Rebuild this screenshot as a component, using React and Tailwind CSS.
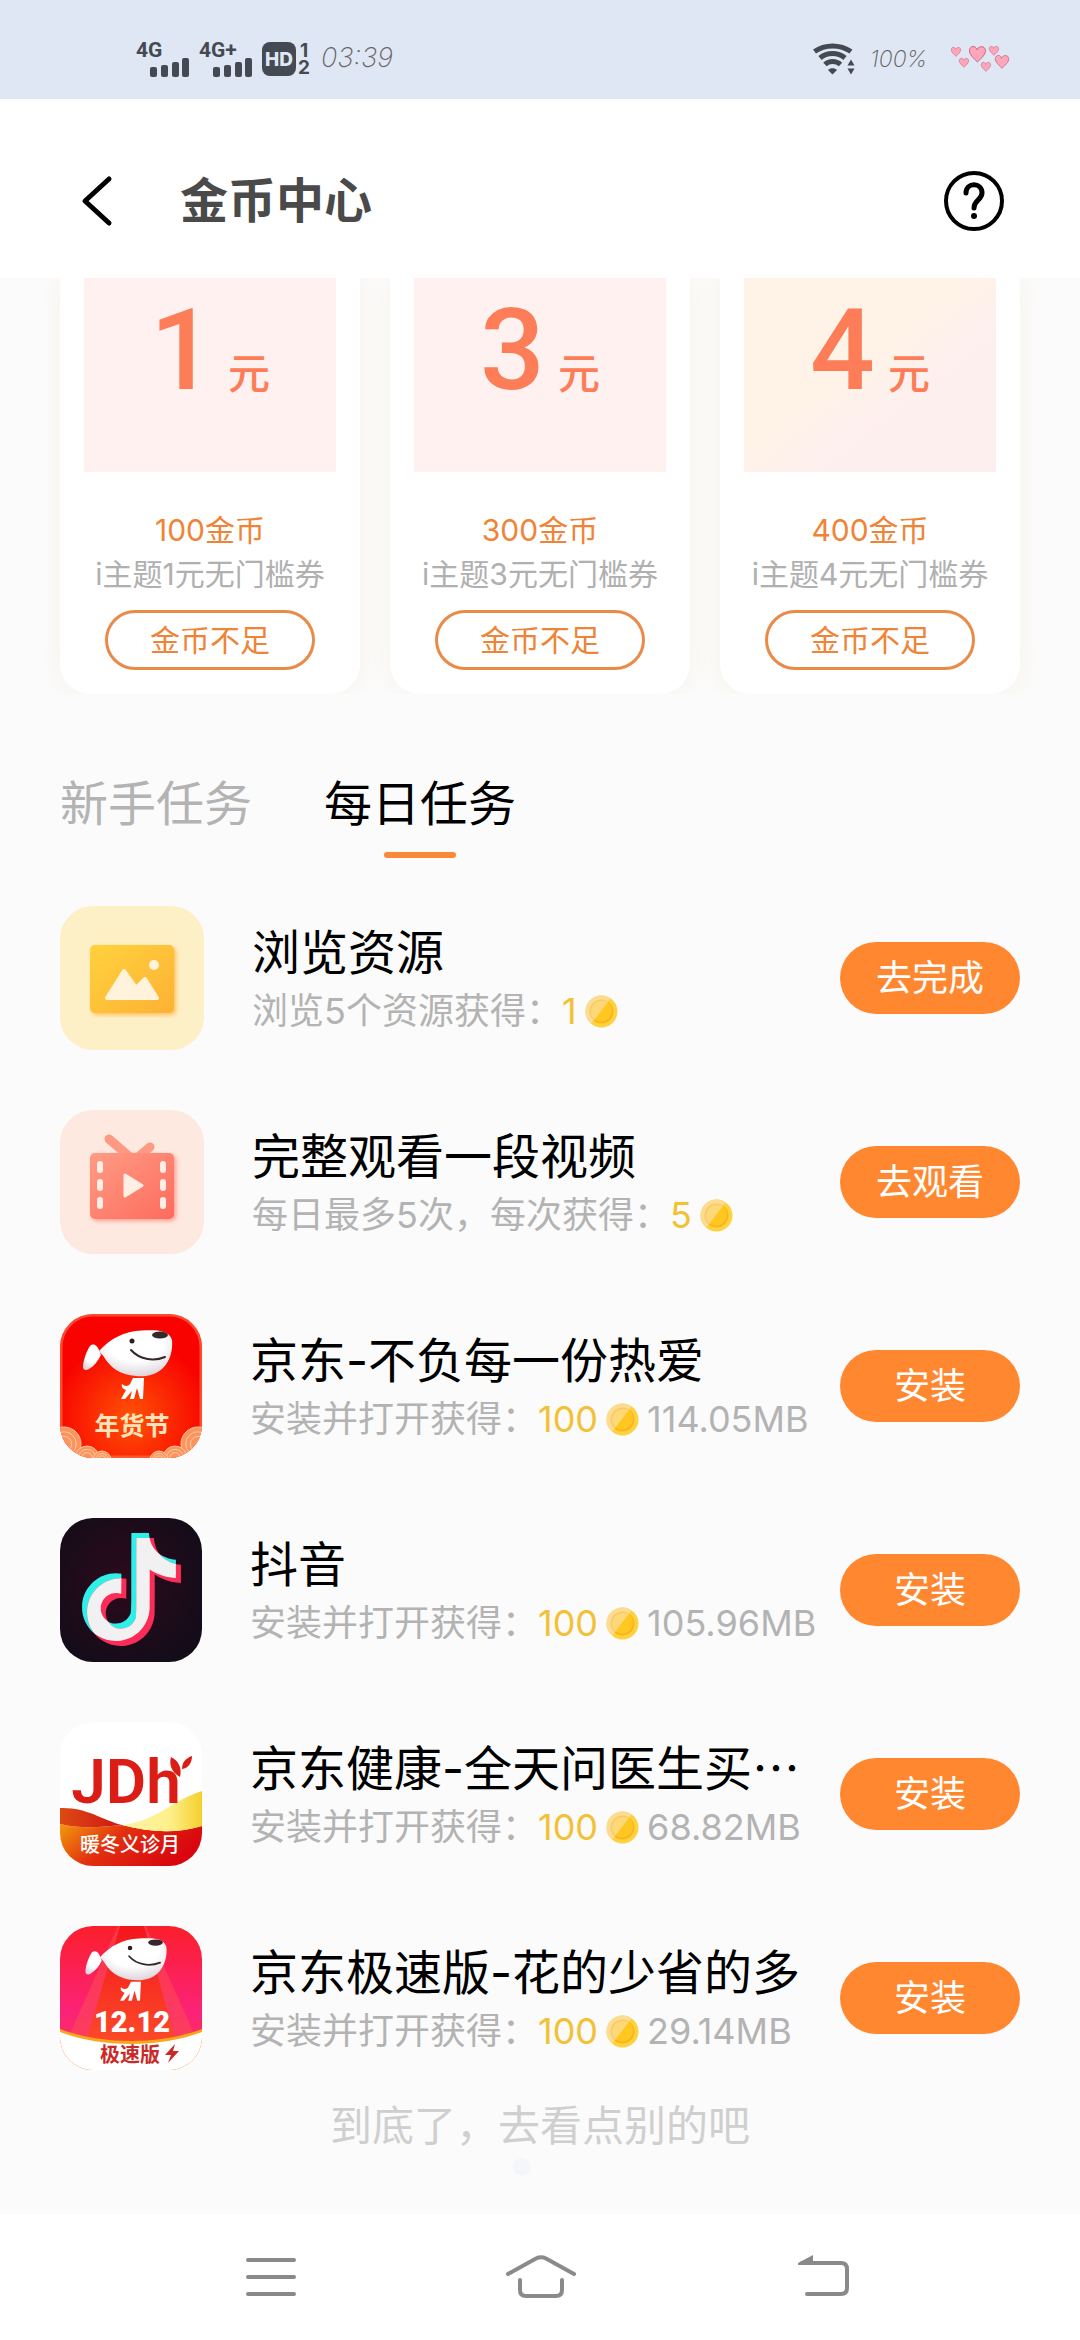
import React, { useId, useState } from "react";

const NOTE_PATH =
  "M12.525.02c1.31-.02 2.61-.01 3.91-.02.08 1.53.63 3.09 1.75 4.17 1.12 1.11 2.7 1.62 4.24 1.79v4.03c-1.44-.05-2.89-.35-4.2-.97-.57-.26-1.1-.59-1.62-.93-.01 2.92.01 5.84-.02 8.75-.08 1.4-.54 2.79-1.35 3.94-1.31 1.92-3.58 3.17-5.91 3.21-1.43.08-2.86-.31-4.08-1.03-2.02-1.19-3.44-3.37-3.65-5.71-.02-.5-.03-1-.01-1.49.18-1.9 1.12-3.72 2.58-4.96 1.66-1.44 3.98-2.13 6.15-1.72.02 1.48-.04 2.96-.04 4.44-.99-.32-2.15-.23-3.02.37-.63.41-1.11 1.04-1.36 1.75-.21.51-.15 1.07-.14 1.61.24 1.64 1.82 3.02 3.5 2.87 1.12-.01 2.19-.66 2.77-1.61.19-.33.4-.67.41-1.06.1-1.79.06-3.57.07-5.36.01-4.03-.01-8.05.02-12.07z";

const SignalBars = () => (
  <svg width="40" height="19" viewBox="0 0 40 19" fill="#454a52">
    <rect x="0" y="9" width="7" height="10" rx="2" />
    <rect x="11" y="7" width="7" height="12" rx="2" />
    <rect x="22" y="4" width="7" height="15" rx="2" />
    <rect x="32" y="0" width="7" height="19" rx="2" />
  </svg>
);

const Signal = ({ label }) => (
  <div className="flex w-[54px] flex-col">
    <span className="font-[Roboto,sans-serif] text-[21px] leading-[16px] font-bold">{label}</span>
    <div className="pl-[14px]">
      <SignalBars />
    </div>
  </div>
);

const WifiIcon = () => (
  <svg width="42" height="32" viewBox="0 0 42 32">
    <g fill="none" stroke="#454a52" strokeWidth="5">
      <path d="M1.500 8.500C12 1 27 1 38 8.500" />
      <path d="M7 15c7-6 18-6 25 0" />
      <path d="M12 21.500c4-4 11-4 15.500 0" />
    </g>
    <path d="M15 27c2-2.500 7-2.500 9 0l-4.500 4.500z" fill="#454a52" />
    <path d="M34.500 22.500l3.500-6 3.500 6zM34.500 25.500l3.500 6 3.500-6z" fill="#454a52" />
  </svg>
);

const Heart = ({ x, y, s }) => (
  <path
    transform={`translate(${x} ${y}) scale(${s})`}
    d="M9 17C5 13 0 9 .5 4.500 1-.5 7-1 8.500 4 10.500-.5 17-.5 17.500 4.500 18 9 13 13 9 17z"
    fill="#ffa6bb"
    stroke="#c2607c"
    strokeWidth="1"
  />
);

const HeartsIcon = () => (
  <svg width="61" height="28" viewBox="0 0 61 28">
    <Heart x={1} y={2} s={0.55} />
    <Heart x={9} y={13} s={0.55} />
    <Heart x={19} y={1} s={0.94} />
    <Heart x={39} y={1} s={0.55} />
    <Heart x={31} y={17} s={0.55} />
    <Heart x={45} y={10} s={0.78} />
  </svg>
);

const StatusBar = () => (
  <div className="flex h-[99px] items-start justify-between bg-[#dee7f3] pt-[42px] pr-[69px] pl-[136px] text-[#454a52]">
    <div className="flex items-start">
      <Signal label="4G" />
      <div className="pl-[9px]">
        <Signal label="4G+" />
      </div>
      <div className="ml-[9px] flex h-[34px] w-[34px] items-center justify-center rounded-lg bg-[#454a52] text-[19px] leading-none font-extrabold text-[#dee7f3]">
        HD
      </div>
      <div className="ml-[2px] flex flex-col text-[19px] leading-[17px] font-bold">
        <span className="pl-[2px]">1</span>
        <span>2</span>
      </div>
      <span className="ml-[11px] text-[27px] leading-[32px] font-extralight text-[#6a6464] italic">
        03:39
      </span>
    </div>
    <div className="flex items-center">
      <WifiIcon />
      <span className="ml-[15px] w-[70px] text-[23px] leading-[34px] font-extralight text-[#5d5a58] italic">
        100%
      </span>
      <div className="pl-[10px]">
        <HeartsIcon />
      </div>
    </div>
  </div>
);

const Header = () => (
  <header className="flex h-[179px] items-center bg-white pt-6 pr-[76px] pl-[80px]">
    <button aria-label="返回">
      <svg width="34" height="52" viewBox="0 0 34 52">
        <path
          d="M29 4L5 26l24 22"
          fill="none"
          stroke="#000"
          strokeWidth="5"
          strokeLinecap="round"
          strokeLinejoin="round"
        />
      </svg>
    </button>
    <h1 className="flex-1 pl-[66px] text-[48px] leading-[60px] font-bold text-[#4a4a4a]">
      金币中心
    </h1>
    <button aria-label="帮助">
      <svg width="60" height="60" viewBox="0 0 60 60" fill="none" stroke="#000">
        <circle cx="30" cy="30" r="28" strokeWidth="4" />
        <path
          d="M22 22c0-11 16-11 16 0 0 7-8 7-8 15"
          strokeWidth="5"
          strokeLinecap="round"
        />
        <circle cx="30" cy="45" r="3" fill="#000" stroke="none" />
      </svg>
    </button>
  </header>
);

const coupons = [
  { value: 1, cost: "100金币", name: "i主题1元无门槛券", bg: "bg-[#fef1ef]" },
  { value: 3, cost: "300金币", name: "i主题3元无门槛券", bg: "bg-[#fef1ef]" },
  {
    value: 4,
    cost: "400金币",
    name: "i主题4元无门槛券",
    bg: "bg-linear-to-br from-[#fff3e8] from-45% to-[#feefef] to-65%",
  },
];

const CouponCard = ({ coupon }) => (
  <div className="flex flex-col items-center rounded-b-[30px] bg-white px-6 pb-6 shadow-[0_0_24px_rgba(235,190,130,0.14)]">
    <div
      className={`flex h-[194px] w-full items-baseline justify-center gap-[13px] pt-1 text-[#fc7d57] ${coupon.bg}`}
    >
      <span className="font-[Roboto,sans-serif] text-[114px] leading-[136px] font-medium">
        {coupon.value}
      </span>
      <span className="text-[42px] leading-[60px] font-medium">元</span>
    </div>
    <p className="mt-9 text-[30px] leading-[44px] text-[#ef8436]">{coupon.cost}</p>
    <p className="text-[30px] leading-[44px] whitespace-nowrap text-[#b0b0b0]">
      {coupon.name}
    </p>
    <button className="mt-[14px] h-[60px] w-[210px] rounded-full border-3 border-[#e98a48] text-[30px] leading-[44px] text-[#ef8436]">
      金币不足
    </button>
  </div>
);

const Coin = () => {
  const id = useId();
  return (
    <svg width="33" height="33" viewBox="0 0 33 33">
      <defs>
        <clipPath id={id}>
          <path d="M0 0h28L5 30 0 33z" />
        </clipPath>
      </defs>
      <circle cx="16.500" cy="16.500" r="16" fill="#fdd23f" />
      <circle cx="16.500" cy="16.500" r="12" fill="#f9b420" />
      <circle cx="16" cy="15.500" r="11" fill="#ffc71f" />
      <g clipPath={`url(#${id})`}>
        <circle cx="16.500" cy="16.500" r="16" fill="#fbdc92" />
        <circle cx="16.500" cy="16.500" r="12" fill="#f9c96a" />
        <circle cx="17" cy="17" r="11" fill="#fdd877" />
      </g>
    </svg>
  );
};

const PictureIcon = () => (
  <svg width="144" height="144" viewBox="0 0 144 144">
    <defs>
      <linearGradient id="picture-fill" x1="0" y1="0" x2="1" y2="1">
        <stop offset="0" stopColor="#ffd23c" />
        <stop offset="1" stopColor="#fdb135" />
      </linearGradient>
      <filter id="picture-shadow" x="-20%" y="-20%" width="140%" height="140%">
        <feGaussianBlur stdDeviation="2" />
      </filter>
    </defs>
    <rect width="144" height="144" rx="33" fill="#fef0c6" />
    <rect x="32" y="41" width="84" height="68" rx="5" fill="#fcc05a" filter="url(#picture-shadow)" />
    <rect x="30" y="39" width="84" height="68" rx="5" fill="url(#picture-fill)" />
    <path
      d="M47 92l17-27 12 17 9-9 12 19z"
      fill="#fff3dc"
      stroke="#fff3dc"
      strokeWidth="4"
      strokeLinejoin="round"
    />
    <circle cx="94" cy="59" r="5" fill="#fff3dc" />
  </svg>
);

const VideoIcon = () => (
  <svg width="144" height="144" viewBox="0 0 144 144">
    <defs>
      <linearGradient id="video-fill" x1="0" y1="0" x2="1" y2="1">
        <stop offset="0" stopColor="#ff9c84" />
        <stop offset="1" stopColor="#fd6b5e" />
      </linearGradient>
      <filter id="video-shadow" x="-20%" y="-20%" width="140%" height="140%">
        <feGaussianBlur stdDeviation="2" />
      </filter>
    </defs>
    <rect width="144" height="144" rx="33" fill="#fde9df" />
    <rect x="32" y="45" width="84" height="66" rx="5" fill="#fd9d8e" filter="url(#video-shadow)" />
    <g stroke="#fe9a83" strokeWidth="9" strokeLinecap="round">
      <path d="M49 29l22 19" />
      <path d="M90 37L77 48" />
    </g>
    <rect x="30" y="43" width="84" height="66" rx="5" fill="url(#video-fill)" />
    <g fill="#ffeee4">
      <rect x="37" y="51" width="6" height="12" rx="3" />
      <rect x="37" y="69" width="6" height="12" rx="3" />
      <rect x="37" y="87" width="6" height="12" rx="3" />
      <rect x="100" y="51" width="6" height="12" rx="3" />
      <rect x="100" y="69" width="6" height="12" rx="3" />
      <rect x="100" y="87" width="6" height="12" rx="3" />
      <path
        d="M65 65v21l17-10.500z"
        stroke="#ffeee4"
        strokeWidth="3"
        strokeLinejoin="round"
      />
    </g>
  </svg>
);

const JoyDog = () => {
  const id = useId();
  return (
    <g>
      <defs>
        <radialGradient id={id} cx="0.5" cy="0.3" r="0.75">
          <stop offset="0.5" stopColor="#fff" />
          <stop offset="1" stopColor="#d9cfd6" />
        </radialGradient>
      </defs>
      <path
        d="M39 36C37 31 33 29 30 32 27 36 23 47 23 53c0 3 3 4 6 2 5-3 9-8 12-14z"
        fill={`url(#${id})`}
      />
      <path
        d="M39 37C50 25 64 17 82 16.500 97 16 109 16 112 26c1 10-2 21-9 28-7 7-17 9-27 8C60 61 50 53 44 43c-1-2-3-3-5-6z"
        fill={`url(#${id})`}
      />
      <ellipse cx="100" cy="21" rx="8" ry="3.500" fill="#33292b" />
      <circle cx="72" cy="27" r="2.500" fill="#2a2022" />
      <path
        d="M71 36c8 9 22 12 34 7"
        fill="none"
        stroke="#33292b"
        strokeWidth="2"
        strokeLinecap="round"
      />
      <path
        d="M73 64h11l-1 21h-3l-3-11-3 11h-4l2-8-7 8h-4l5-9c-3-1-5-3-4-6 3 3 7 2 8 0z"
        fill="#fff"
      />
    </g>
  );
};

const iconFont = "Noto Sans CJK SC, sans-serif";

const Cloud = ({ cx, cy, r }) => (
  <g fill="none" stroke="#ffc99d" strokeWidth="1">
    <circle cx={cx} cy={cy} r={r} fill="#fb9560" />
    <circle cx={cx} cy={cy} r={r * 0.72} />
    <circle cx={cx} cy={cy} r={r * 0.45} />
  </g>
);

const JdIcon = () => (
  <svg width="142" height="144" viewBox="0 0 142 144">
    <defs>
      <clipPath id="jd-clip">
        <rect width="142" height="144" rx="33" />
      </clipPath>
      <radialGradient id="jd-glow" cx="0.5" cy="0.72" r="0.55">
        <stop offset="0" stopColor="#ff5205" />
        <stop offset="1" stopColor="#f80300" />
      </radialGradient>
    </defs>
    <g clipPath="url(#jd-clip)">
      <rect width="142" height="144" fill="url(#jd-glow)" />
      <rect
        width="142"
        height="144"
        rx="33"
        fill="none"
        stroke="#ff7a4c"
        strokeWidth="5"
        opacity="0.6"
      />
      <Cloud cx={4} cy={130} r={17} />
      <Cloud cx={138} cy={130} r={17} />
      <Cloud cx={27} cy={144} r={12} />
      <Cloud cx={115} cy={144} r={12} />
      <Cloud cx={42} cy={146} r={9} />
      <Cloud cx={99} cy={146} r={9} />
      <JoyDog />
      <text
        x="72"
        y="121"
        textAnchor="middle"
        fontFamily={iconFont}
        fontSize="25"
        fontWeight="700"
        fill="#ffe4bb"
      >
        年货节
      </text>
    </g>
  </svg>
);

const DouyinIcon = () => (
  <svg width="142" height="144" viewBox="0 0 142 144">
    <defs>
      <radialGradient id="douyin-bg" cx="0.45" cy="0.45" r="0.6">
        <stop offset="0" stopColor="#2c0a1c" />
        <stop offset="1" stopColor="#150c19" />
      </radialGradient>
      <clipPath id="douyin-clip">
        <path d={NOTE_PATH} transform="translate(15 15) scale(4.500)" />
      </clipPath>
    </defs>
    <rect width="142" height="144" rx="33" fill="url(#douyin-bg)" />
    <path d={NOTE_PATH} transform="translate(15 15) scale(4.500)" fill="#2ff0e8" />
    <path d={NOTE_PATH} transform="translate(20 20) scale(4.500)" fill="#fb2c58" />
    <g clipPath="url(#douyin-clip)">
      <path d={NOTE_PATH} transform="translate(20 20) scale(4.500)" fill="#f1f1f1" />
    </g>
  </svg>
);

const JdHealthIcon = () => (
  <svg width="142" height="144" viewBox="0 0 142 144">
    <defs>
      <clipPath id="jdh-clip">
        <rect width="142" height="144" rx="33" />
      </clipPath>
      <linearGradient id="jdh-base" x1="0" y1="0" x2="1" y2="0.35">
        <stop offset="0" stopColor="#f39a0c" />
        <stop offset="0.45" stopColor="#e2300f" />
        <stop offset="1" stopColor="#d9060f" />
      </linearGradient>
      <linearGradient id="jdh-gold" x1="0" y1="0" x2="1" y2="0">
        <stop offset="0" stopColor="#fdf3a8" />
        <stop offset="0.6" stopColor="#fdf08a" />
        <stop offset="1" stopColor="#f5cf2c" />
      </linearGradient>
      <linearGradient id="jdh-red" x1="0" y1="0" x2="1" y2="0">
        <stop offset="0" stopColor="#dd4a12" />
        <stop offset="1" stopColor="#cf1512" />
      </linearGradient>
    </defs>
    <g clipPath="url(#jdh-clip)">
      <rect width="142" height="144" fill="#fff" />
      <path d="M0 102c20 5 42 3 62 1 26 7 54 9 80 1v40H0z" fill="url(#jdh-base)" />
      <path d="M62 103c36-4 48-24 80-34v35c-26 8-54 6-80-1z" fill="url(#jdh-gold)" />
      <path d="M0 86c26-1 40 11 62 17-20 2-42 4-62-1z" fill="url(#jdh-red)" />
      <text
        x="66"
        y="81"
        textAnchor="middle"
        fontFamily="Roboto, sans-serif"
        fontSize="62"
        fontWeight="600"
        fill="#dc1d16"
      >
        JDh
      </text>
      <path d="M120 55c-9-5-11-13-9-20 8 4 11 11 9 20z" fill="#dc1d16" />
      <path d="M122 47c0-7 4-11 10-13 0 6-3 12-10 13z" fill="#dc1d16" />
      <text
        x="70"
        y="130"
        textAnchor="middle"
        fontFamily={iconFont}
        fontSize="20"
        fontWeight="500"
        fill="#fff"
      >
        暖冬义诊月
      </text>
    </g>
  </svg>
);

const JdLiteIcon = () => (
  <svg width="142" height="144" viewBox="0 0 142 144">
    <defs>
      <clipPath id="lite-clip">
        <rect width="142" height="144" rx="33" />
      </clipPath>
      <linearGradient id="lite-bg" x1="0" y1="0" x2="0" y2="1">
        <stop offset="0" stopColor="#fb1f2c" />
        <stop offset="0.6" stopColor="#fc2278" />
        <stop offset="1" stopColor="#fb3a4a" />
      </linearGradient>
      <linearGradient id="lite-beam" x1="0" y1="0" x2="0" y2="1">
        <stop offset="0" stopColor="#f4161b" />
        <stop offset="1" stopColor="#fb4a28" />
      </linearGradient>
    </defs>
    <g clipPath="url(#lite-clip)">
      <rect width="142" height="144" fill="url(#lite-bg)" />
      <path d="M58 0h28l50 112H8z" fill="#fb4a55" opacity="0.6" />
      <path d="M60 0h24l32 116H26z" fill="url(#lite-beam)" />
      <path d="M0 103c42 16 100 16 142 0v41H0z" fill="#fba51d" />
      <path d="M0 106c42 16 100 16 142 0v38H0z" fill="#fff" />
      <g transform="translate(4.500 -2.500) scale(0.910)">
        <JoyDog />
      </g>
      <text
        x="72"
        y="106"
        textAnchor="middle"
        fontFamily="Liberation Sans Narrow, Roboto, sans-serif"
        fontSize="29"
        fontWeight="900"
        fill="#fff"
      >
        12.12
      </text>
      <text
        x="70"
        y="136"
        textAnchor="middle"
        fontFamily={iconFont}
        fontSize="20"
        fontWeight="700"
        fill="#c92a28"
      >
        极速版
      </text>
      <path d="M115 118l-10 11h6l-3 8 11-12h-6z" fill="#c92a28" />
    </g>
  </svg>
);

const tasks = [
  { icon: PictureIcon, title: "浏览资源", desc: "浏览5个资源获得：", coins: 1, action: "去完成" },
  {
    icon: VideoIcon,
    title: "完整观看一段视频",
    desc: "每日最多5次，每次获得：",
    coins: 5,
    action: "去观看",
  },
  {
    icon: JdIcon,
    title: "京东-不负每一份热爱",
    desc: "安装并打开获得：",
    coins: 100,
    size: "114.05MB",
    action: "安装",
  },
  {
    icon: DouyinIcon,
    title: "抖音",
    desc: "安装并打开获得：",
    coins: 100,
    size: "105.96MB",
    action: "安装",
  },
  {
    icon: JdHealthIcon,
    title: "京东健康-全天问医生买",
    clipped: true,
    desc: "安装并打开获得：",
    coins: 100,
    size: "68.82MB",
    action: "安装",
  },
  {
    icon: JdLiteIcon,
    title: "京东极速版-花的少省的多",
    desc: "安装并打开获得：",
    coins: 100,
    size: "29.14MB",
    action: "安装",
  },
];

const TaskRow = ({ task }) => {
  const Icon = task.icon;
  return (
    <li className="flex items-center">
      <Icon />
      <div className="min-w-0 flex-1 pl-12 whitespace-nowrap">
        <h2 className="text-[48px] leading-[60px] text-black">
          {task.title}
          {task.clipped && (
            <span className="font-['Noto_Sans_CJK_SC',sans-serif] leading-none">…</span>
          )}
        </h2>
        <div className="mt-[6px] flex items-center text-[36px] leading-[44px] text-[#b3b3b3]">
          <span>{task.desc}</span>
          <span className="mr-2 text-[#f3c136]">{task.coins}</span>
          <Coin />
          {task.size && <span className="ml-2">{task.size}</span>}
        </div>
      </div>
      <button className="h-[72px] w-[180px] shrink-0 rounded-full bg-[#ff8730] text-[36px] leading-[44px] text-white">
        {task.action}
      </button>
    </li>
  );
};

const NavBar = () => (
  <nav className="flex h-[126px] items-center justify-between bg-white pr-[231px] pl-[246px]">
    <button aria-label="菜单">
      <svg width="50" height="44" viewBox="0 0 50 44">
        <path d="M2 5h46M2 22h46M2 39h46" stroke="#8a8a8a" strokeWidth="4" strokeLinecap="round" />
      </svg>
    </button>
    <button aria-label="主页">
      <svg
        width="70"
        height="44"
        viewBox="0 0 70 44"
        fill="none"
        stroke="#8a8a8a"
        strokeWidth="4"
        strokeLinecap="round"
      >
        <path d="M2 19L30 3.500q5-2.500 10 0L68 19" />
        <path d="M14 25v10q0 6 6 6h30q6 0 6-6V25" />
      </svg>
    </button>
    <button aria-label="后退">
      <svg width="63" height="44" viewBox="0 0 63 44">
        <path
          d="M16 8h39q6 0 6 6v19q0 6-6 6H21"
          fill="none"
          stroke="#8a8a8a"
          strokeWidth="4"
          strokeLinecap="round"
        />
        <path d="M12 10v-2L27 0v10z" fill="#8a8a8a" />
      </svg>
    </button>
  </nav>
);

const tabs = ["新手任务", "每日任务"];

export default function App() {
  const [activeTab, setActiveTab] = useState("每日任务");

  return (
    <div
      lang="zh-CN"
      className="flex min-h-screen flex-col bg-[#fbfbfb] font-[Inter,'Noto_Sans_CJK_SC',sans-serif] [&_svg]:block [&_svg]:shrink-0"
    >
      <StatusBar />
      <Header />

      <main className="flex flex-1 flex-col">
        {/* Coupons */}
        <section className="grid grid-cols-3 gap-[30px] overflow-hidden px-[60px]">
          {coupons.map((coupon) => (
            <CouponCard key={coupon.value} coupon={coupon} />
          ))}
        </section>

        {/* Task tabs */}
        <div className="mt-20 flex gap-[72px] px-[60px]">
          {tabs.map((tab) => (
            <button
              key={tab}
              onClick={() => setActiveTab(tab)}
              className={`flex flex-col items-center text-[48px] leading-[60px] ${
                tab === activeTab ? "text-black" : "text-[#b3b3b3]"
              }`}
            >
              {tab}
              {tab === activeTab && (
                <span className="mt-[18px] h-[6px] w-[72px] rounded-full bg-[#fb8838]" />
              )}
            </button>
          ))}
        </div>

        {/* Tasks */}
        <ul className="mt-12 flex flex-col gap-[60px] px-[60px]">
          {tasks.map((task) => (
            <TaskRow key={task.title} task={task} />
          ))}
        </ul>

        <p className="mt-[26px] text-center text-[42px] leading-[60px] text-[#cfcfcf]">
          到底了，去看点别的吧
        </p>
        <span className="mt-[2px] mr-9 h-[18px] w-[18px] self-center rounded-full bg-[#f4f6f9]" />
      </main>

      <NavBar />
    </div>
  );
}
